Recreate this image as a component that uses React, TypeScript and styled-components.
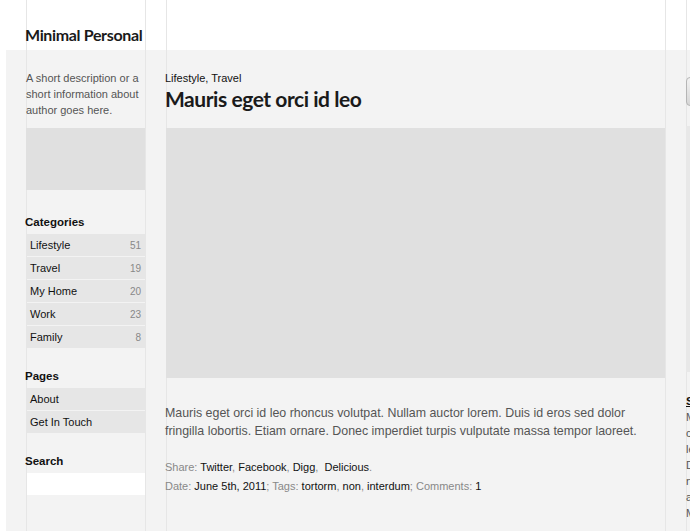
import React from "react";
import styled, { createGlobalStyle } from "styled-components";

const GlobalStyle = createGlobalStyle`
  html, body {
    margin: 0;
    padding: 0;
    overflow: hidden;
    background: #fff;
  }
  body {
    font-family: "Liberation Sans", Arial, sans-serif;
    font-size: 11px;
    color: #555;
  }
`;

const guideColor = "#e6e6e6";
const guides = (offsets: number[]) =>
  offsets
    .map((x) => `linear-gradient(${guideColor}, ${guideColor}) ${x}px 0 / 1px 100% no-repeat`)
    .join(", ");

const Page = styled.div`
  width: 1100px;
  min-height: 100vh;
  display: flex;
  flex-direction: column;
`;

const Header = styled.header`
  height: 50px;
  box-sizing: border-box;
  padding: 25px 0 0 25px;
  background: ${guides([26, 145, 166, 665, 686])}, #fff;
`;

const SiteTitle = styled.h1`
  margin: 0;
  font-family: Lato, "Open Sans", sans-serif;
  font-weight: 700;
  font-size: 16px;
  line-height: 20px;
  color: #1a1a1a;
  letter-spacing: -0.35px;
`;

const Band = styled.div`
  flex: 1;
  margin-left: 6px;
  padding-left: 19px;
  display: flex;
  gap: 20px;
  min-height: 481px;
  background: ${guides([20, 139, 160, 659, 680])}, #f3f3f3;
`;

const Sidebar = styled.aside`
  width: 120px;
  flex: none;
  padding-top: 20px;
`;

const Description = styled.p`
  margin: 0 0 0 1px;
  line-height: 16px;
  color: #555;
`;

const AdBox = styled.div`
  margin: 10px 0 0 1px;
  width: 119px;
  height: 62px;
  background: #e0e0e0;
`;

const WidgetTitle = styled.h3<{ $first?: boolean }>`
  margin: ${(p) => (p.$first ? "24px" : "20px")} 0 4px;
  font-size: 11.5px;
  line-height: 16px;
  font-weight: 700;
  color: #111;
`;

const List = styled.ul`
  list-style: none;
  margin: 0 0 0 2px;
  padding: 0;
  width: 118px;
  display: flex;
  flex-direction: column;
  gap: 1px;
`;

const Item = styled.li`
  height: 22px;
  display: flex;
  align-items: center;
  justify-content: space-between;
  padding: 0 4px 0 3px;
  background: #e6e6e6;
  color: #111;
`;

const Count = styled.span`
  font-size: 10px;
  color: #888;
`;

const SearchInput = styled.input`
  display: block;
  margin: 0 0 0 2px;
  width: 118px;
  height: 22px;
  box-sizing: border-box;
  border: none;
  background: #fff;
  outline: none;
`;

const Main = styled.main`
  width: 500px;
  flex: none;
  padding-top: 20px;
`;

const PostCats = styled.div`
  line-height: 16px;
  color: #111;
`;

const PostTitle = styled.h2`
  margin: 0 0 16px;
  font-family: Lato, "Open Sans", sans-serif;
  font-weight: 700;
  font-size: 21px;
  line-height: 26px;
  color: #1a1a1a;
  letter-spacing: -0.45px;
`;

const PostImage = styled.div`
  margin-left: 1px;
  width: 499px;
  height: 250px;
  background: #e0e0e0;
`;

const PostText = styled.p`
  margin: 26px 0 18px;
  width: 480px;
  font-size: 12.4px;
  line-height: 18px;
  color: #555;
`;

const Meta = styled.div`
  line-height: 19px;
  color: #888;
`;

const MetaLink = styled.a`
  color: #111;
  text-decoration: none;
`;

const RightCol = styled.aside`
  width: 260px;
  flex: none;
  padding-top: 27px;
`;

const Button = styled.div`
  margin-left: 1px;
  width: 80px;
  height: 29px;
  box-sizing: border-box;
  border: 1px solid #b5b5b5;
  border-radius: 4px;
  background: linear-gradient(#f2f2f2, #d6d6d6);
`;

const SideBox = styled.div`
  margin: 20px 0 0 1px;
  height: 246px;
  background: #e8e8e8;
`;

const RightTitle = styled.h3`
  margin: 21px 0 0 1px;
  font-size: 11.5px;
  line-height: 16px;
  font-weight: 700;
  color: #111;
  text-decoration: underline;
`;

const RightLine = styled.span`
  display: block;
  margin-left: 1px;
  line-height: 16px;
  color: #555;
`;

const categories = [
  { name: "Lifestyle", count: 51 },
  { name: "Travel", count: 19 },
  { name: "My Home", count: 20 },
  { name: "Work", count: 23 },
  { name: "Family", count: 8 },
];

const rightLines = [
  "Mauris eget orci id leo",
  "consectetur adipiscing",
  "lectus in turpis",
  "Duis id eros sed dolor",
  "nulla fringilla lobortis",
  "ante ornare donec",
  "Mauris imperdiet turpis",
];

export default function App() {
  return (
    <>
      <GlobalStyle />
      <Page>
        <Header>
          <SiteTitle>Minimal Personal</SiteTitle>
        </Header>
        <Band>
          <Sidebar>
            <Description>
              A short description or a short information about author goes here.
            </Description>
            <AdBox />
            <WidgetTitle $first>Categories</WidgetTitle>
            <List>
              {categories.map((c) => (
                <Item key={c.name}>
                  <span>{c.name}</span>
                  <Count>{c.count}</Count>
                </Item>
              ))}
            </List>
            <WidgetTitle>Pages</WidgetTitle>
            <List>
              <Item>About</Item>
              <Item>Get In Touch</Item>
            </List>
            <WidgetTitle>Search</WidgetTitle>
            <SearchInput type="text" />
          </Sidebar>
          <Main>
            <PostCats>Lifestyle, Travel</PostCats>
            <PostTitle>Mauris eget orci id leo</PostTitle>
            <PostImage />
            <PostText>
              Mauris eget orci id leo rhoncus volutpat. Nullam auctor lorem. Duis id eros sed dolor
              fringilla lobortis. Etiam ornare. Donec imperdiet turpis vulputate massa tempor laoreet.
            </PostText>
            <Meta>
              Share: <MetaLink href="#">Twitter</MetaLink>, <MetaLink href="#">Facebook</MetaLink>,{" "}
              <MetaLink href="#">Digg</MetaLink>,&nbsp; <MetaLink href="#">Delicious</MetaLink>.
            </Meta>
            <Meta>
              Date: <MetaLink as="span">June 5th, 2011</MetaLink>; Tags:{" "}
              <MetaLink href="#">tortorm</MetaLink>, <MetaLink href="#">non</MetaLink>,{" "}
              <MetaLink href="#">interdum</MetaLink>; Comments: <MetaLink href="#">1</MetaLink>
            </Meta>
          </Main>
          <RightCol>
            <Button />
            <SideBox />
            <RightTitle>Subscribe</RightTitle>
            {rightLines.map((l) => (
              <RightLine key={l}>{l}</RightLine>
            ))}
          </RightCol>
        </Band>
      </Page>
    </>
  );
}
